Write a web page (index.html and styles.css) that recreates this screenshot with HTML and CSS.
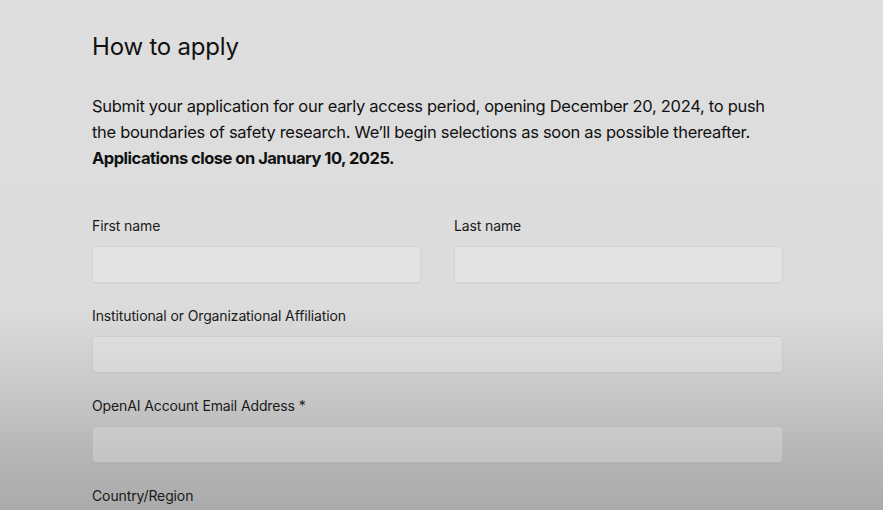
FILE: index.html
```html
<!DOCTYPE html>
<html lang="en">
<head>
<meta charset="utf-8">
<title>How to apply</title>
<link rel="stylesheet" href="styles.css">
</head>
<body>
<main class="page">
  <h2 class="title">How to apply</h2>
  <p class="intro">Submit your application for our early access period, opening December 20, 2024, to push the boundaries of safety research. We’ll begin selections as soon as possible thereafter. <strong>Applications close on January 10, 2025.</strong></p>
  <form class="form">
    <div class="row two">
      <label class="field"><span class="label">First name</span><input class="input" type="text"></label>
      <label class="field"><span class="label">Last name</span><input class="input" type="text"></label>
    </div>
    <label class="field"><span class="label">Institutional or Organizational Affiliation</span><input class="input" type="text"></label>
    <label class="field"><span class="label">OpenAI Account Email Address *</span><input class="input" type="email"></label>
    <label class="field"><span class="label">Country/Region</span><input class="input" type="text"></label>
  </form>
</main>
</body>
</html>
```
FILE: styles.css
```css
html, body {
  margin: 0;
  padding: 0;
  height: 510px;
  overflow: hidden;
}
body {
  background: linear-gradient(to bottom, #dedede 0%, #dcdcdc 60%, #c6c6c6 78%, #b4b4b4 90%, #ababab 100%);
  font-family: Inter, "Liberation Sans", Arial, sans-serif;
  color: #111;
}
.page {
  width: 691px;
  padding: 31px 0 0 92px;
}
.title {
  margin: 0;
  font-size: 24px;
  line-height: 32px;
  font-weight: 400;
  letter-spacing: -0.2px;
}
.intro {
  margin: 30px 0 0;
  font-size: 16.5px;
  line-height: 26px;
  letter-spacing: -0.3px;
}
.intro strong {
  font-weight: 700;
  letter-spacing: -0.5px;
}
.form {
  margin-top: 45px;
  display: flex;
  flex-direction: column;
  gap: 23px;
}
.row.two {
  display: grid;
  grid-template-columns: 1fr 1fr;
  gap: 33px;
}
.field {
  display: flex;
  flex-direction: column;
  gap: 10px;
}
.label {
  font-size: 14px;
  line-height: 20px;
  color: #1a1a1a;
  letter-spacing: -0.12px;
}
.input {
  box-sizing: border-box;
  height: 37px;
  width: 100%;
  margin: 0;
  border: 1px solid rgba(0, 0, 0, 0.07);
  border-radius: 4px;
  background: rgba(255, 255, 255, 0.22);
  box-shadow: 0 1px 1px rgba(0, 0, 0, 0.03);
}
```
